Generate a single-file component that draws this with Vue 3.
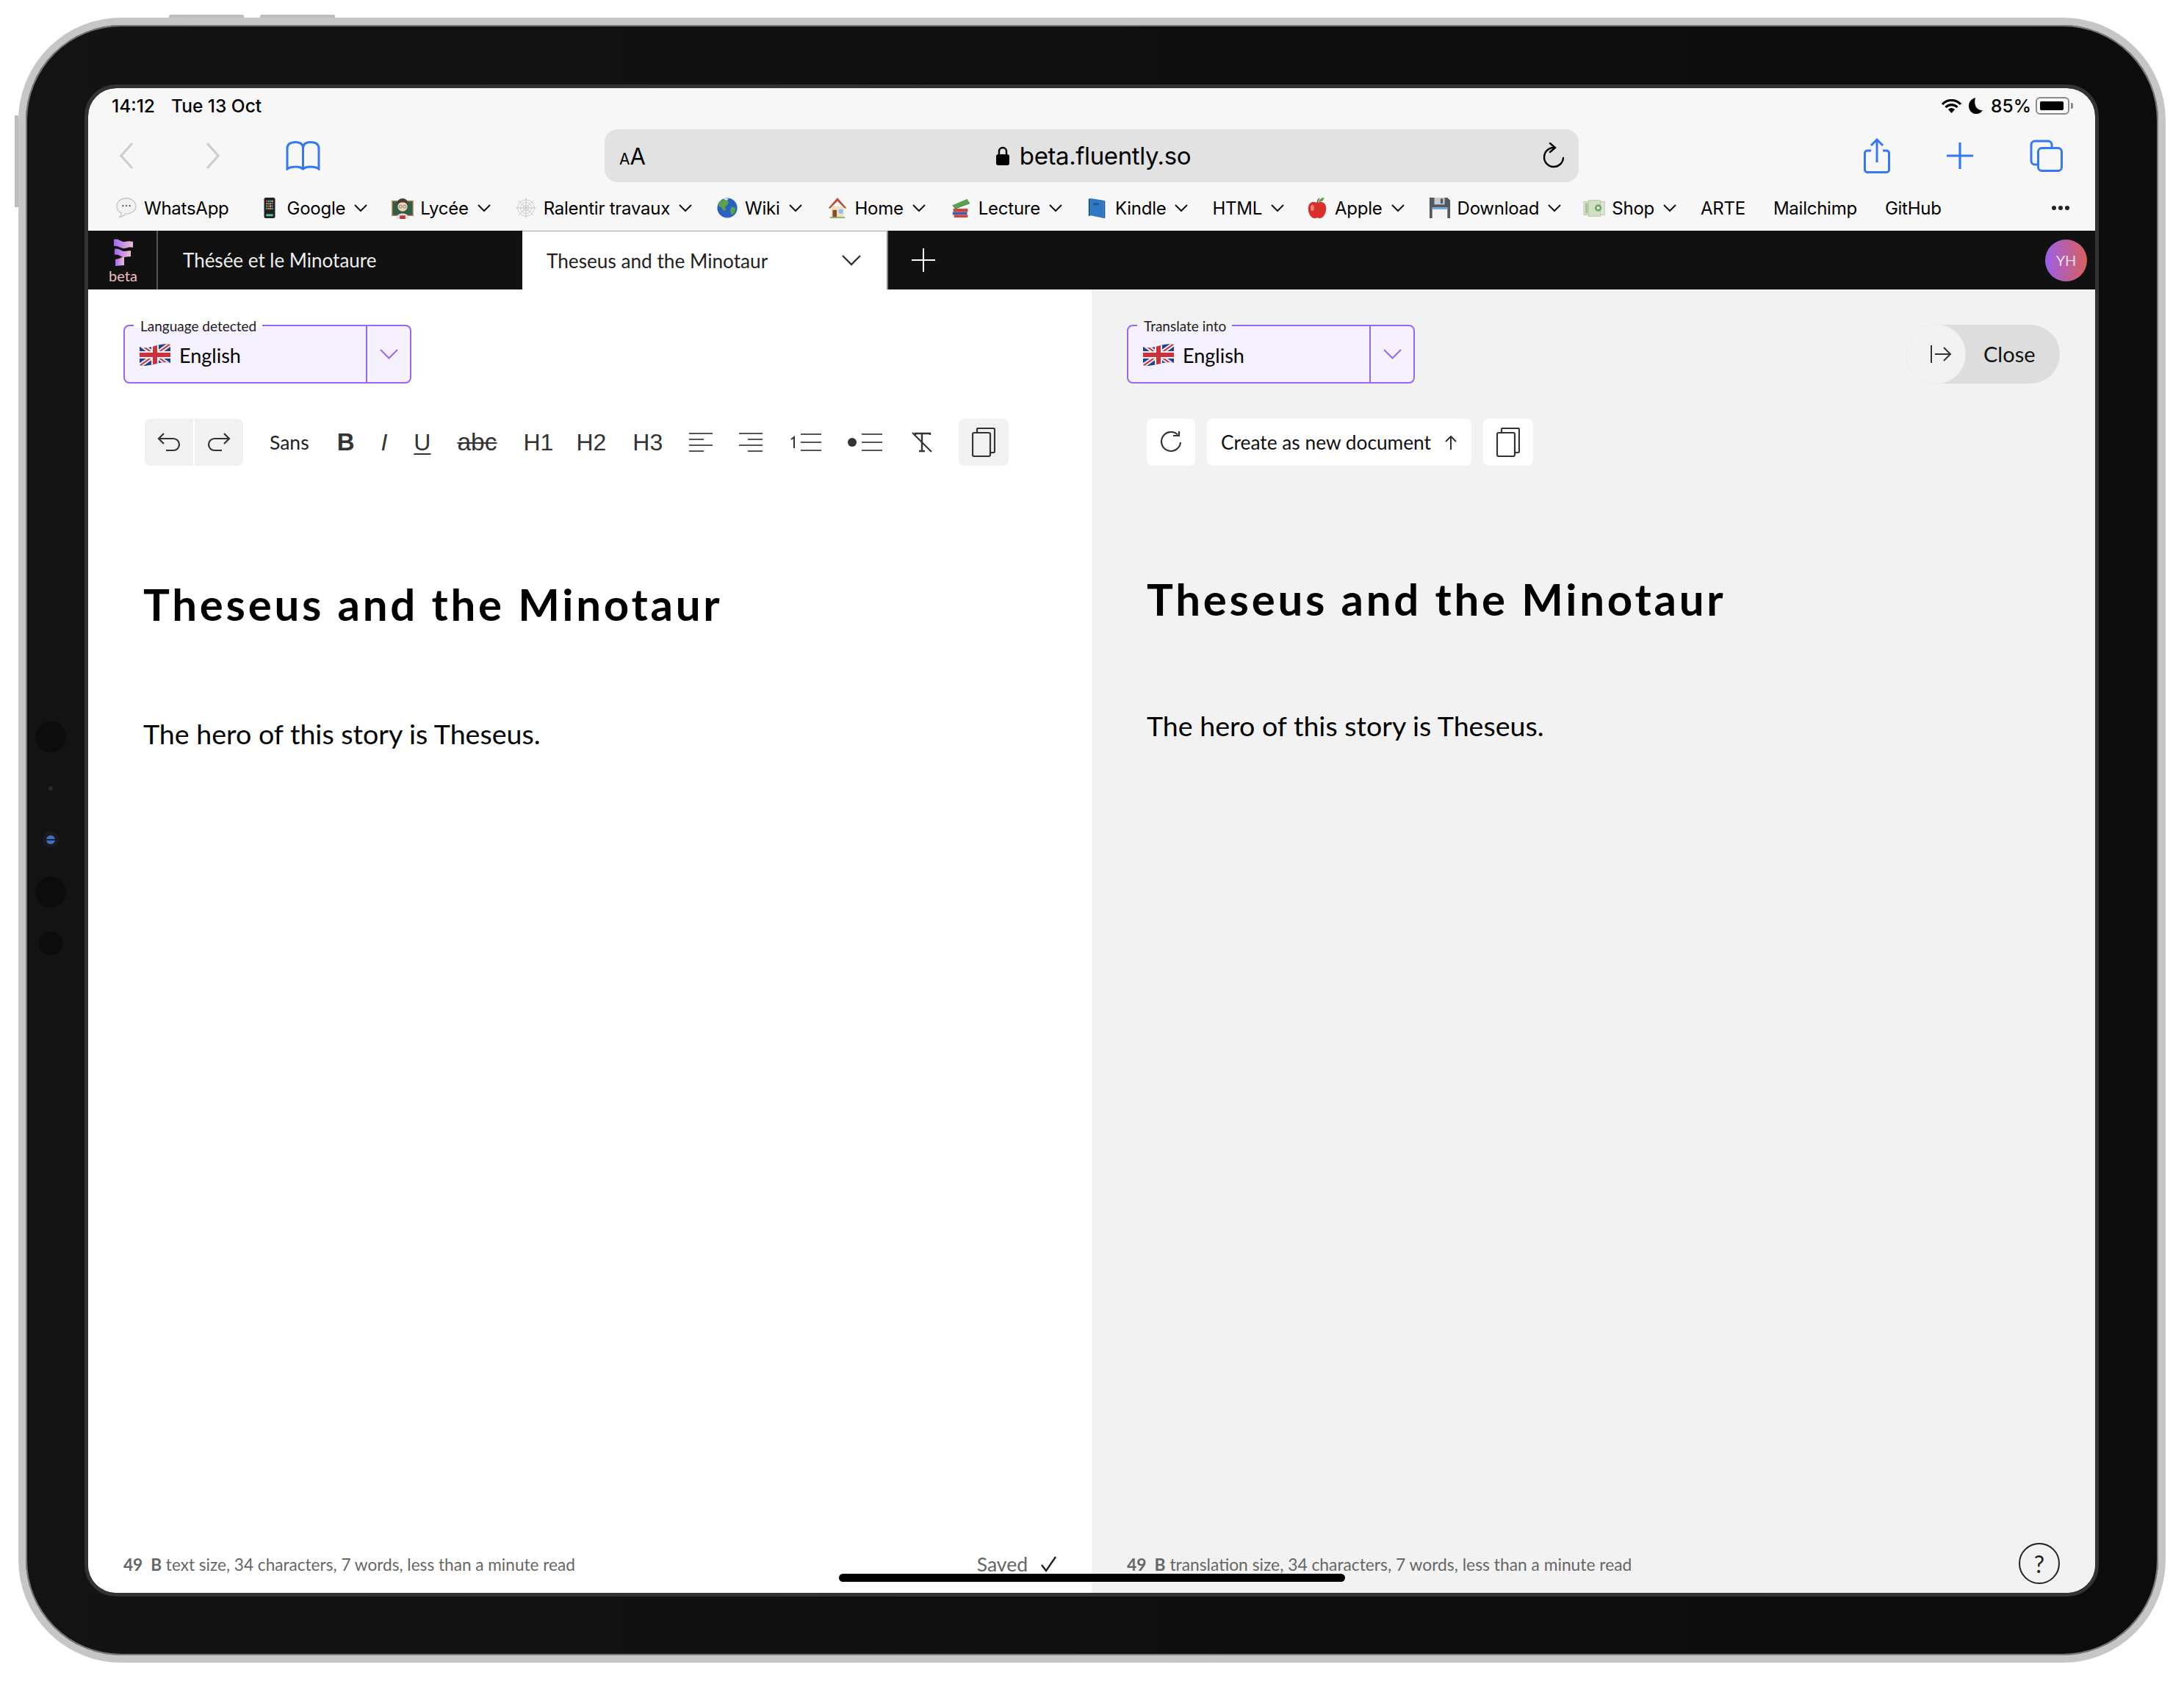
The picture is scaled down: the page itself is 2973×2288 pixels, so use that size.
<template>
  <div class="page">
    <div class="device">
      <i class="hw-btn top-a"></i>
      <i class="hw-btn top-b"></i>
      <i class="hw-btn side"></i>
      <i class="cam cam-a"></i>
      <i class="cam cam-dot"></i>
      <i class="cam cam-lens"></i>
      <i class="cam cam-b"></i>
      <i class="cam cam-c"></i>

      <div class="screen">
        <!-- ipad status bar -->
        <div class="status">
          <span class="time">14:12</span>
          <span class="date">Tue 13 Oct</span>
          <span class="status-right">
            <svg class="wifi" viewBox="0 0 27 19" width="27" height="19">
              <path d="M1 7a17 17 0 0 1 25 0" fill="none" stroke="#000" stroke-width="3.2" />
              <path d="M5.5 11a11 11 0 0 1 16 0" fill="none" stroke="#000" stroke-width="3.2" />
              <path d="M13.5 19l-4.5-5a6 6 0 0 1 9 0z" fill="#000" />
            </svg>
            <svg class="moon" viewBox="0 0 19 22" width="19" height="22">
              <path d="M9 0C3 2 0 6 0 11c0 6 4 11 10 11 4 0 7-2 9-5-7 1-13-6-10-17z" fill="#000" />
            </svg>
            <span class="pct">85%</span>
            <span class="battery"><b></b></span>
            <i class="nub"></i>
          </span>
        </div>

        <!-- safari toolbar -->
        <div class="nav">
          <div class="nav-left">
            <svg width="20" height="36" viewBox="0 0 20 36" class="back">
              <path d="M18 1L3 18l15 17" fill="none" stroke="#cfcfcf" stroke-width="3.4" />
            </svg>
            <svg width="21" height="36" viewBox="0 0 21 36" class="fwd">
              <path d="M3 1l15 17L3 35" fill="none" stroke="#cfcfcf" stroke-width="3.4" />
            </svg>
            <svg width="47" height="40" viewBox="0 0 47 40" class="book">
              <path d="M23.5 38V10c0-5-3-8.500-10-8.500S2 4 2 10v28c4-3 8-3 12-3 4 0 7 1 9.500 3 2.500-2 5.500-3 9.500-3 4 0 8 0 12 3V10c0-6-4-8.500-11.500-8.500S23.500 5 23.500 10" fill="none" stroke="#3478f6" stroke-width="3" />
            </svg>
          </div>
          <div class="address">
            <span class="aa"><small>A</small>A</span>
            <span class="url">
              <svg width="18" height="26" viewBox="0 0 18 26">
                <path d="M4 12V7a5 5 0 0 1 10 0v5" fill="none" stroke="#000" stroke-width="2.4" />
                <rect y="11" width="18" height="15" rx="3" fill="#000" />
              </svg>
              beta.fluently.so
            </span>
            <svg class="reload" width="30" height="36" viewBox="0 0 30 36">
              <path d="M15 7a13 13 0 1 0 13 14" fill="none" stroke="#000" stroke-width="2.4" stroke-linecap="round" />
              <path d="M10 1l7 6-7 6" fill="none" stroke="#000" stroke-width="2.4" stroke-linecap="round" />
            </svg>
          </div>
          <div class="nav-right">
            <svg width="36" height="48" viewBox="0 0 36 48">
              <path d="M10 17H5a3.500 3.500 0 0 0-3.500 3.500v22A3.500 3.500 0 0 0 5 46.500h26a3.500 3.500 0 0 0 3.500-3.500V20.500A3.500 3.500 0 0 0 31 17h-5" fill="none" stroke="#3478f6" stroke-width="3" />
              <path d="M18 33V2M10 10l8-8 8 8" fill="none" stroke="#3478f6" stroke-width="3" />
            </svg>
            <svg width="36" height="36" viewBox="0 0 36 36">
              <path d="M18 0v36M0 18h36" stroke="#3478f6" stroke-width="3.2" />
            </svg>
            <svg width="45" height="44" viewBox="0 0 45 44">
              <path d="M11 34H7a5 5 0 0 1-5-5V7a5 5 0 0 1 5-5h18a5 5 0 0 1 5 5v4" fill="none" stroke="#3478f6" stroke-width="3" />
              <rect x="11.500" y="11.500" width="32" height="31" rx="5" fill="none" stroke="#3478f6" stroke-width="3" />
            </svg>
          </div>
        </div>

        <!-- favourites -->
        <div class="bookmarks">
          <div v-for="b in bookmarks" :key="b.label" class="bookmark" :class="{ plain: !b.menu, tight: b.tight }">
            <svg v-if="b.icon" class="emoji" viewBox="0 0 32 32" width="30" height="30" v-html="emoji[b.icon]"></svg>
            <span class="bm-label">{{ b.label }}</span>
            <svg v-if="b.menu" class="bm-chev" width="18" height="11" viewBox="0 0 18 11">
              <path d="M1 1l8 8 8-8" fill="none" stroke="#111" stroke-width="2" />
            </svg>
          </div>
          <span class="more"><i></i><i></i><i></i></span>
        </div>

        <!-- app tabs -->
        <div class="tabbar">
          <div class="brand">
            <svg width="28" height="37" viewBox="0 0 28 37">
              <defs>
                <linearGradient id="flag" x1="0" x2="1" y1="0" y2="0">
                  <stop offset="0" stop-color="#a566f5" />
                  <stop offset="1" stop-color="#ecbfd0" />
                </linearGradient>
              </defs>
              <path d="M1 1c6-2 10 4 15 3 4-1 7-1 11 0v8c-4-1-7 0-11 1-5 1-9-4-15-3z" fill="url(#flag)" />
              <path d="M2 14c5-2 9 3 13 3 3 0 6-1 9-1v8c-3 0-6 1-9 1-5 0-8-5-13-3z" fill="url(#flag)" />
              <path d="M3 28c3-1 6-1 9-3 1 0 2 0 3-1v12c-4 0-8 1-12 1z" fill="url(#flag)" />
            </svg>
            <span>beta</span>
          </div>
          <div class="doc-tab">Thésée et le Minotaure</div>
          <div class="doc-tab active">
            <span>Theseus and the Minotaur</span>
            <svg width="26" height="15" viewBox="0 0 26 15">
              <path d="M1 1l12 12L25 1" fill="none" stroke="#333" stroke-width="2.400" />
            </svg>
          </div>
          <svg class="new-tab" width="32" height="32" viewBox="0 0 32 32">
            <path d="M16 0v32M0 16h32" stroke="#fff" stroke-width="2" />
          </svg>
          <div class="avatar">YH</div>
        </div>

        <div class="panels">
          <!-- source -->
          <section class="panel source">
            <div class="top-row">
              <div class="lang">
                <span class="legend">Language detected</span>
                <div class="lang-value">
                  <svg class="flag" viewBox="0 0 42 30" width="42" height="30" v-html="ukFlag"></svg>
                  English
                </div>
                <div class="lang-arrow">
                  <svg width="25" height="14" viewBox="0 0 25 14">
                    <path d="M1 1l11.500 11.500L24 1" fill="none" stroke="#9b66f0" stroke-width="2" />
                  </svg>
                </div>
              </div>
            </div>

            <div class="toolbar">
              <div class="history">
                <button class="tool-btn">
                  <svg width="32" height="28" viewBox="0 0 32 28">
                    <path d="M9 2L2 9l7 7M2 9h20a8 8 0 0 1 8 8v0a8 8 0 0 1-8 8H12" fill="none" stroke="#333" stroke-width="2.200" />
                  </svg>
                </button>
                <button class="tool-btn">
                  <svg width="32" height="28" viewBox="0 0 32 28">
                    <path d="M23 2l7 7-7 7M30 9H10a8 8 0 0 0-8 8v0a8 8 0 0 0 8 8h10" fill="none" stroke="#333" stroke-width="2.200" />
                  </svg>
                </button>
              </div>
              <span class="tool sans">Sans</span>
              <span class="tool bold">B</span>
              <span class="tool ital">I</span>
              <span class="tool under">U</span>
              <span class="tool strike">abc</span>
              <span class="tool">H1</span>
              <span class="tool h2">H2</span>
              <span class="tool">H3</span>
              <svg width="32" height="26" viewBox="0 0 32 26">
                <path d="M0 1h32M0 9h20M0 17h32M0 25h20" stroke="#555" stroke-width="2" />
              </svg>
              <svg width="32" height="26" viewBox="0 0 32 26">
                <path d="M0 1h32M12 9h20M0 17h32M12 25h20" stroke="#555" stroke-width="2" />
              </svg>
              <svg class="ol" width="42" height="24" viewBox="0 0 42 24">
                <path d="M14 1h28M14 12h28M14 23h28" stroke="#555" stroke-width="2" />
                <path d="M1 8l4-3v15" fill="none" stroke="#333" stroke-width="2" />
              </svg>
              <svg width="47" height="24" viewBox="0 0 47 24">
                <circle cx="6" cy="12" r="6" fill="#333" />
                <path d="M19 1h28M19 12h28M19 23h28" stroke="#555" stroke-width="2" />
              </svg>
              <svg class="clear" width="28" height="28" viewBox="0 0 28 28">
                <path d="M5 4V2h20v2M14 2v24M10 26h8" fill="none" stroke="#333" stroke-width="2.400" />
                <path d="M1 1l26 26" stroke="#333" stroke-width="2.200" />
              </svg>
              <button class="copy-btn grey">
                <svg width="32" height="40" viewBox="0 0 32 40" v-html="copyIcon"></svg>
              </button>
            </div>

            <article class="doc">
              <h1>Theseus and the Minotaur</h1>
              <p>The hero of this story is Theseus.</p>
            </article>

            <footer class="foot">
              <span class="count"><b>49&nbsp;&nbsp;B</b> text size, 34 characters, 7 words, less than a minute read</span>
              <span class="saved">Saved
                <svg width="21" height="22" viewBox="0 0 21 22">
                  <path d="M1 12l6 8L20 1" fill="none" stroke="#222" stroke-width="2.400" />
                </svg>
              </span>
            </footer>
          </section>

          <!-- translation -->
          <section class="panel target">
            <div class="top-row">
              <div class="lang">
                <span class="legend grey-bg">Translate into</span>
                <div class="lang-value">
                  <svg class="flag" viewBox="0 0 42 30" width="42" height="30" v-html="ukFlag"></svg>
                  English
                </div>
                <div class="lang-arrow">
                  <svg width="25" height="14" viewBox="0 0 25 14">
                    <path d="M1 1l11.500 11.500L24 1" fill="none" stroke="#9b66f0" stroke-width="2" />
                  </svg>
                </div>
              </div>
              <button class="close">
                <span class="close-knob">
                  <svg width="30" height="24" viewBox="0 0 30 24">
                    <path d="M2 0v24M7 12h21M19 3l9 9-9 9" fill="none" stroke="#333" stroke-width="2" />
                  </svg>
                </span>
                <span class="close-label">Close</span>
              </button>
            </div>

            <div class="toolbar actions">
              <button class="copy-btn refresh">
                <svg width="30" height="30" viewBox="0 0 30 30">
                  <path d="M24 4.500A13 13 0 1 0 28 15" fill="none" stroke="#333" stroke-width="2.200" />
                  <path d="M18 6h8V0" fill="none" stroke="#333" stroke-width="2.200" />
                </svg>
              </button>
              <button class="create">
                <span>Create as new document</span>
                <svg width="18" height="20" viewBox="0 0 18 20">
                  <path d="M9 20V2M2 9l7-7 7 7" fill="none" stroke="#333" stroke-width="2" />
                </svg>
              </button>
              <button class="copy-btn">
                <svg width="32" height="40" viewBox="0 0 32 40" v-html="copyIcon"></svg>
              </button>
            </div>

            <article class="doc">
              <h1>Theseus and the Minotaur</h1>
              <p>The hero of this story is Theseus.</p>
            </article>

            <footer class="foot">
              <span class="count"><b>49&nbsp;&nbsp;B</b> translation size, 34 characters, 7 words, less than a minute read</span>
              <span class="help">?</span>
            </footer>
          </section>

          <i class="home-bar"></i>
        </div>
      </div>
    </div>
  </div>
</template>

<script setup>
const bookmarks = [
  { label: 'WhatsApp', icon: 'chat' },
  { label: 'Google', icon: 'phone', menu: true },
  { label: 'Lycée', icon: 'teacher', menu: true },
  { label: 'Ralentir travaux', icon: 'web', menu: true },
  { label: 'Wiki', icon: 'globe', menu: true },
  { label: 'Home', icon: 'house', menu: true },
  { label: 'Lecture', icon: 'books', menu: true },
  { label: 'Kindle', icon: 'kindle', menu: true },
  { label: 'HTML', menu: true, tight: true },
  { label: 'Apple', icon: 'apple', menu: true },
  { label: 'Download', icon: 'floppy', menu: true, tight: true },
  { label: 'Shop', icon: 'money', menu: true },
  { label: 'ARTE' },
  { label: 'Mailchimp' },
  { label: 'GitHub' }
]

const phoneDots = ['#e44', '#4c6', '#48e', '#fc3', '#e7a', '#3bb', '#f82', '#86e', '#4c6', '#e44', '#fc3', '#48e', '#3bb', '#f82', '#e7a', '#4c6']
  .map((c, i) => `<rect x="${11 + (i % 4) * 2.6}" y="${5 + Math.floor(i / 4) * 3.6}" width="2" height="2.4" fill="${c}"/>`)
  .join('')

const emoji = {
  chat: '<path d="M16 2C8 2 2 7 2 13.500c0 4.500 3 8 7 10 0 2-1 4-3 6 4-.500 7-2.500 9-5h1c8 0 14-5 14-11S24 2 16 2z" fill="#f2f2f2" stroke="#bdbdbd" stroke-width="1.200"/><circle cx="11" cy="13" r="1.200" fill="#555"/><circle cx="16" cy="13" r="1.200" fill="#555"/><circle cx="21" cy="13" r="1.200" fill="#555"/>',
  phone: '<rect x="8" y="1" width="16" height="30" rx="2.500" fill="#222"/>' + phoneDots + '<rect x="11" y="25" width="10" height="3" fill="#5c8"/>',
  teacher: '<rect x="1" y="6" width="30" height="21" fill="#2f5d45" stroke="#a9804f" stroke-width="1.500"/><path d="M7 32c0-6 4-8 9-8s9 2 9 8z" fill="#ddd"/><rect x="12" y="27" width="8" height="5" fill="#b33"/><circle cx="16" cy="14" r="7" fill="#f3d2b6"/><path d="M8 13c-1-8 4-11 8-11s9 3 8 11c-1-3-3-5-8-5s-7 2-8 5z" fill="#4a3b33"/><circle cx="13" cy="14" r="2.200" fill="none" stroke="#777"/><circle cx="19" cy="14" r="2.200" fill="none" stroke="#777"/>',
  web: '<g fill="none" stroke="#bbb" stroke-width=".8"><path d="M16 1v30M1 16h30M5 5l22 22M27 5L5 27"/><circle cx="16" cy="16" r="4"/><circle cx="16" cy="16" r="8"/><circle cx="16" cy="16" r="12"/></g>',
  globe: '<circle cx="16" cy="16" r="14.500" fill="#2a62c4"/><path d="M8 5c4-2 8-1 10 2l-2 5-3 2 1 5-3 1-5-6-3-1c0-4 2-6 5-8zM22 14l6 2c0 5-2 8-5 10l-3-5z" fill="#5ea14a"/><path d="M10 3c3-1 6-1 8 0l-3 2z" fill="#e8eef8"/>',
  house: '<rect x="7" y="14" width="18" height="16" fill="#efe0c4"/><path d="M16 1L3 16l2 1L16 6l11 11 2-1z" fill="#b8503f"/><rect x="9" y="19" width="6" height="11" fill="#8a4e2d"/><rect x="18" y="18" width="6" height="6" fill="#8fc1e6"/><rect x="5" y="29" width="22" height="2" fill="#8bb26a"/>',
  books: '<path d="M4 12l21-9 4 6-21 8z" fill="#5aa34e"/><path d="M4 12l4 5 21-8" fill="none" stroke="#3c7c36"/><rect x="5" y="17" width="21" height="5" fill="#c9473f"/><rect x="4" y="22" width="21" height="4" fill="#3b5fa8"/><rect x="6" y="26" width="20" height="4" fill="#c9473f"/>',
  kindle: '<path d="M6 2l19 3v26L6 27z" fill="#2f78c4"/><path d="M6 2L3 3v25l3-1zM25 5l2 1v25h-2z" fill="#1d5796"/><rect x="10" y="9" width="8" height="3" fill="#1d5796"/>',
  apple: '<path d="M16 9C11 6 3 7 3 17c0 8 5 14 9 14 2 0 3-1 4-1s2 1 4 1c4 0 9-6 9-14 0-10-8-11-13-8z" fill="#d9302c"/><path d="M16 10c0-3 1-6 3-8" stroke="#6a4a2a" stroke-width="1.500" fill="none"/><path d="M18 7c1-4 5-6 8-6 0 4-4 7-8 6z" fill="#5aa34e"/><ellipse cx="9" cy="16" rx="2.500" ry="4.500" fill="#f1817c"/>',
  floppy: '<path d="M1 1h26l4 4v26H1z" fill="#55585e"/><rect x="8" y="1" width="15" height="10" fill="#c8ccd2"/><rect x="17" y="2.500" width="3.500" height="7" fill="#55585e"/><rect x="5" y="15" width="22" height="16" fill="#f3f3f3"/><rect x="5" y="15" width="22" height="3" fill="#6fa8dc"/>',
  money: '<rect x="1" y="7" width="30" height="19" fill="#dbe8d2" stroke="#bcbcb0"/><rect x="8" y="5" width="17" height="23" fill="#cfe0c4" stroke="#a9c49a" stroke-width=".8"/><circle cx="22" cy="16" r="5" fill="#6fa368"/><circle cx="22" cy="16" r="2.200" fill="#e5efdf"/><rect x="3" y="9" width="4" height="15" fill="#a6c298"/>'
}

const ukFlag = `
  <clipPath id="wave"><path d="M0 4c14 5 28-7 42-3v25c-14-4-28 7-42 3z"/></clipPath>
  <g clip-path="url(#wave)">
    <rect width="42" height="30" fill="#23408f"/>
    <path d="M0 0l42 30M42 0L0 30" stroke="#eee" stroke-width="6"/>
    <path d="M0 0l42 30M42 0L0 30" stroke="#c8313e" stroke-width="2"/>
    <path d="M21 0v30M0 15h42" stroke="#eee" stroke-width="10"/>
    <path d="M21 0v30M0 15h42" stroke="#c8313e" stroke-width="6"/>
  </g>`

const copyIcon = `
  <path d="M7 6V2.500A1.500 1.500 0 0 1 8.500 1h21A1.500 1.500 0 0 1 31 2.500v30a1.500 1.500 0 0 1-1.500 1.500H26" fill="none" stroke="#333" stroke-width="2.200"/>
  <rect x="1" y="7" width="24" height="32" rx="2" fill="none" stroke="#333" stroke-width="2.200"/>`
</script>

<style>
html,
body {
  margin: 0;
  background: #fff;
}
</style>

<style scoped>
.page {
  width: 2973px;
  height: 2288px;
  padding: 24px 25px;
  box-sizing: border-box;
  font-family: "Lato", "Noto Sans", sans-serif;
  color: #000;
}

.device {
  position: relative;
  box-sizing: border-box;
  width: 2923px;
  height: 2239px;
  padding: 86px 86px 85px 85px;
  border: 10px solid #c6c6c6;
  border-radius: 140px;
  background: linear-gradient(90deg, #131313, #0c0c0c);
  box-shadow: inset 0 0 0 2px #777;
}

.hw-btn {
  position: absolute;
  background: #bdbdbd;
}

.top-a,
.top-b {
  top: -14px;
  height: 4px;
  width: 102px;
  border-radius: 2px 2px 0 0;
}

.top-a {
  left: 195px;
}

.top-b {
  left: 319px;
}

.side {
  left: -15px;
  top: 123px;
  width: 5px;
  height: 125px;
}

.cam {
  position: absolute;
  border-radius: 50%;
  background: #0c0c0c;
}

.cam-a,
.cam-b {
  left: 13px;
  width: 42px;
  height: 42px;
}

.cam-a {
  top: 948px;
}

.cam-b {
  top: 1159px;
}

.cam-c {
  left: 18px;
  top: 1234px;
  width: 32px;
  height: 32px;
}

.cam-dot {
  left: 31px;
  top: 1036px;
  width: 6px;
  height: 6px;
  background: #2a2a2a;
}

.cam-lens {
  left: 28px;
  top: 1103px;
  width: 12px;
  height: 12px;
  background: linear-gradient(#3f6fc0 42%, #12203c 42% 58%, #3f6fc0 58%);
  box-shadow: 0 0 0 5px #1a1a20;
}

.screen {
  box-sizing: border-box;
  width: 2732px;
  height: 2048px;
  display: flex;
  flex-direction: column;
  position: relative;
  overflow: hidden;
  border-radius: 38px;
  background: #f7f7f7;
  outline: 5px solid #333;
}

/* status bar */
.status {
  flex: none;
  height: 48px;
  padding: 0 30px 0 32px;
  display: flex;
  align-items: center;
  font-family: "Inter", sans-serif;
  font-size: 24.5px;
  font-weight: 500;
}

.date {
  margin-left: 22px;
}

.status-right {
  margin-left: auto;
  display: flex;
  align-items: center;
}

.wifi {
  margin-right: 10px;
}

.pct {
  margin-left: 11px;
  margin-right: 6px;
}

.battery {
  box-sizing: border-box;
  width: 46px;
  height: 24px;
  padding: 4px;
  border: 2px solid #8a8a8a;
  border-radius: 6px;
  display: flex;
}

.battery b {
  width: 32px;
  background: #000;
  border-radius: 2px;
}

.nub {
  width: 3px;
  height: 8px;
  margin-left: 2px;
  background: #8a8a8a;
  border-radius: 0 2px 2px 0;
}

/* safari nav */
.nav {
  flex: none;
  height: 88px;
  display: flex;
  align-items: center;
}

.nav-left {
  flex: none;
  width: 703px;
  box-sizing: border-box;
  padding-left: 42px;
  display: flex;
  align-items: center;
}

.fwd {
  margin-left: 97px;
}

.book {
  margin-left: 89px;
}

.address {
  flex: none;
  width: 1326px;
  height: 72px;
  box-sizing: border-box;
  padding: 0 19px 0 20px;
  display: grid;
  grid-template-columns: 1fr auto 1fr;
  align-items: center;
  border-radius: 18px;
  background: #e2e2e2;
  font-family: "Inter", sans-serif;
}

.aa {
  font-size: 31px;
  line-height: 1;
}

.aa small {
  font-size: 21px;
}

.url {
  display: flex;
  align-items: center;
  gap: 14px;
  margin-left: 4px;
  font-size: 33px;
  letter-spacing: -0.4px;
}

.reload {
  justify-self: end;
}

.nav-right {
  margin-left: 388px;
  display: flex;
  align-items: center;
  gap: 77px;
}

/* favourites */
.bookmarks {
  flex: none;
  height: 58px;
  box-sizing: border-box;
  padding: 0 35px 4px 37px;
  display: flex;
  align-items: center;
  gap: 33px;
  font-family: "Inter", sans-serif;
  font-size: 24px;
  letter-spacing: -0.25px;
}

.bookmark {
  display: flex;
  align-items: center;
  gap: 9px;
}

.bookmark.plain {
  margin-right: 5px;
}

.bookmark.plain:first-child {
  margin-right: 7px;
}

.bookmark.tight {
  margin-right: -3px;
}

.bm-chev {
  margin-left: 3px;
}

.more {
  margin-left: auto;
  display: flex;
  gap: 3px;
}

.more i {
  width: 6px;
  height: 6px;
  border-radius: 50%;
  background: #222;
}

/* app tabs */
.tabbar {
  flex: none;
  height: 80px;
  display: flex;
  align-items: stretch;
  background: #111;
  color: #eee;
  font-size: 26px;
}

.brand {
  width: 95px;
  box-sizing: border-box;
  border-right: 2px solid #555;
  padding: 11px 0 0 2px;
  display: flex;
  flex-direction: column;
  align-items: center;
  gap: 2px;
  font-size: 20px;
  line-height: 22px;
  color: #efc0c5;
}

.doc-tab {
  width: 496px;
  box-sizing: border-box;
  padding: 0 34px;
  display: flex;
  align-items: center;
}

.doc-tab.active {
  width: 498px;
  padding: 0 35px 0 33px;
  justify-content: space-between;
  background: #fff;
  color: #222;
  font-size: 26.2px;
  border-right: 2px solid #888;
  border-top: 1px solid #aaa;
}

.new-tab {
  align-self: center;
  margin-left: 32px;
}

.avatar {
  align-self: center;
  margin-left: auto;
  margin-right: 11px;
  width: 57px;
  height: 57px;
  display: flex;
  align-items: center;
  justify-content: center;
  border-radius: 50%;
  background: linear-gradient(90deg, #9b5fe8, #d8605a);
  color: #e8dfe8;
  font-size: 20px;
}

/* editor panels */
.panels {
  flex: 1;
  min-height: 0;
  position: relative;
  display: flex;
}

.panel {
  flex: 1;
  min-width: 0;
  box-sizing: border-box;
  padding: 48px 48px 12px;
  display: flex;
  flex-direction: column;
  background: #fff;
}

.target {
  background: #f2f2f2;
}

.top-row {
  display: flex;
  justify-content: space-between;
  align-items: center;
}

.lang {
  position: relative;
  box-sizing: border-box;
  width: 392px;
  height: 80px;
  display: flex;
  border: 2px solid #9b66f0;
  border-radius: 8px;
  background: #f6f1ff;
}

.legend {
  position: absolute;
  left: 12px;
  top: -12px;
  padding: 0 8px 0 9px;
  height: 14px;
  line-height: 24px;
  font-size: 19px;
  color: #222;
  background: #fff;
}

.legend.grey-bg {
  background: #f2f2f2;
}

.lang-value {
  flex: 1;
  display: flex;
  align-items: center;
  gap: 12px;
  padding-left: 20px;
  padding-top: 2px;
  font-size: 27px;
}

.lang-arrow {
  width: 58px;
  display: flex;
  align-items: center;
  justify-content: center;
  border-left: 2px solid #9b66f0;
}

.close {
  width: 209px;
  height: 80px;
  padding: 0;
  display: flex;
  align-items: center;
  border: 0;
  border-radius: 40px;
  background: #ddd;
  font-family: inherit;
  color: #111;
}

.close-knob {
  box-sizing: border-box;
  width: 80px;
  height: 80px;
  padding-left: 14px;
  display: flex;
  align-items: center;
  justify-content: center;
  border-radius: 50%;
  background: #f2f2f2;
  box-shadow: 0 0 0 1px #ececec;
}

.close-label {
  margin-left: 25px;
  margin-top: -2px;
  font-size: 29px;
}

.toolbar {
  height: 64px;
  margin-top: 48px;
  margin-left: 29px;
  display: flex;
  align-items: center;
  gap: 36px;
}

.history {
  display: flex;
  gap: 2px;
}

.tool-btn {
  width: 66px;
  height: 64px;
  padding: 0;
  display: flex;
  align-items: center;
  justify-content: center;
  border: 0;
  background: #f1f1f1;
}

.tool-btn:first-child {
  border-radius: 8px 0 0 8px;
}

.tool-btn:last-child {
  border-radius: 0 8px 8px 0;
}

.tool {
  font-family: "Liberation Sans", sans-serif;
  font-size: 32px;
  color: #333;
}

.sans {
  font-family: "Lato", sans-serif;
  font-size: 26.5px;
  color: #222;
}

.bold {
  margin-left: 2px;
  font-size: 33px;
  font-weight: 700;
}

.ital {
  font-style: italic;
}

.under {
  text-decoration: underline;
  text-underline-offset: 4px;
  text-decoration-thickness: 2px;
}

.strike {
  font-size: 33.5px;
  text-decoration: line-through;
  text-decoration-thickness: 2px;
}

.h2 {
  margin-left: -5px;
}

.ol {
  margin-left: 2px;
}

.clear {
  margin-left: 4px;
}

.copy-btn {
  width: 68px;
  height: 64px;
  padding: 0;
  display: flex;
  align-items: center;
  justify-content: center;
  border: 0;
  border-radius: 8px;
  background: #fff;
}

.copy-btn.grey {
  background: #f1f1f1;
}

.actions {
  margin-left: 27px;
  gap: 16px;
}

.refresh {
  width: 66px;
}

.create {
  width: 360px;
  height: 64px;
  padding: 0 19px;
  display: flex;
  align-items: center;
  justify-content: space-between;
  border: 0;
  border-radius: 8px;
  background: #fff;
  font-family: "Lato", sans-serif;
  font-size: 26.3px;
  color: #111;
  white-space: nowrap;
}

.doc {
  margin-left: 27px;
}

.doc h1 {
  margin: 148px 0 0;
  font-size: 60px;
  line-height: 80px;
  font-weight: 700;
  letter-spacing: 3.75px;
}

.doc p {
  margin: 107px 0 0;
  font-size: 37.6px;
  line-height: 60px;
}

.target .doc h1 {
  margin-top: 141px;
}

.target .doc p {
  margin-top: 103px;
}

.foot {
  margin-top: auto;
  height: 56px;
  display: flex;
  align-items: center;
  justify-content: space-between;
  font-size: 22.6px;
  color: #666;
}

.target .foot {
  font-size: 22.8px;
}

.count {
  margin-top: 2px;
}

.count b {
  font-weight: 700;
}

.saved {
  display: flex;
  align-items: center;
  gap: 18px;
  margin-top: 2px;
  font-size: 26.5px;
}

.help {
  width: 56px;
  height: 56px;
  box-sizing: border-box;
  display: flex;
  align-items: center;
  justify-content: center;
  border: 2px solid #222;
  border-radius: 50%;
  font-size: 32px;
  color: #222;
}

.home-bar {
  position: absolute;
  left: 1022px;
  top: 1748px;
  width: 689px;
  height: 11px;
  border-radius: 6px;
  background: #000;
}
</style>
